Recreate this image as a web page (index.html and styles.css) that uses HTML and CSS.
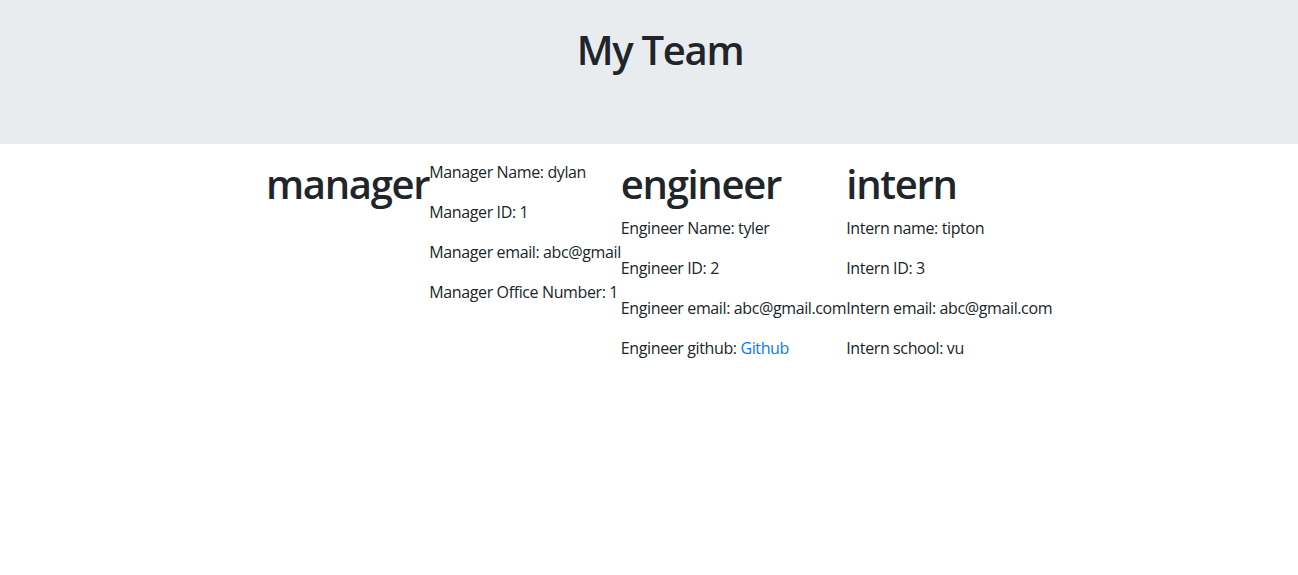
FILE: index.html
```html
<!DOCTYPE html>
<html lang="en">
<head>
<meta charset="utf-8">
<title>My Team</title>
<link rel="stylesheet" href="styles.css">
</head>
<body>
<header class="jumbotron">
  <h1 class="title">My Team</h1>
</header>
<main class="team">
  <section class="card card-row">
    <h1 class="role">manager</h1>
    <div class="info">
      <p>Manager Name: dylan</p>
      <p>Manager ID: 1</p>
      <p>Manager email: abc@gmail</p>
      <p>Manager Office Number: 1</p>
    </div>
  </section>
  <section class="card">
    <h1 class="role">engineer</h1>
    <div class="info">
      <p>Engineer Name: tyler</p>
      <p>Engineer ID: 2</p>
      <p>Engineer email: abc@gmail.com</p>
      <p>Engineer github: <a href="#">Github</a></p>
    </div>
  </section>
  <section class="card">
    <h1 class="role">intern</h1>
    <div class="info">
      <p>Intern name: tipton</p>
      <p>Intern ID: 3</p>
      <p>Intern email: abc@gmail.com</p>
      <p>Intern school: vu</p>
    </div>
  </section>
</main>
</body>
</html>
```
FILE: styles.css
```css
html, body {
  margin: 0;
  padding: 0;
}
body {
  font-family: "Open Sans", "Noto Sans", sans-serif;
  font-size: 16px;
  line-height: 1.5;
  color: #212529;
  background: #fff;
}
.jumbotron {
  background: #e9ecef;
  height: 144px;
  box-sizing: border-box;
  padding: 26px 0 0 22px;
}
.title {
  margin: 0;
  text-align: center;
  font-size: 40px;
  line-height: 48px;
  font-weight: 600;
  letter-spacing: -1.3px;
}
.team {
  display: flex;
  justify-content: center;
  padding: 16px 0 0 20px;
}
.card-row {
  display: flex;
  align-items: flex-start;
}
.role {
  margin: 0 0 8px;
  font-size: 40px;
  line-height: 48px;
  font-weight: 600;
  letter-spacing: -1.3px;
}
.info p {
  margin: 0 0 16px;
  white-space: nowrap;
  letter-spacing: -0.38px;
}
a {
  color: #007bff;
  text-decoration: none;
}
```
